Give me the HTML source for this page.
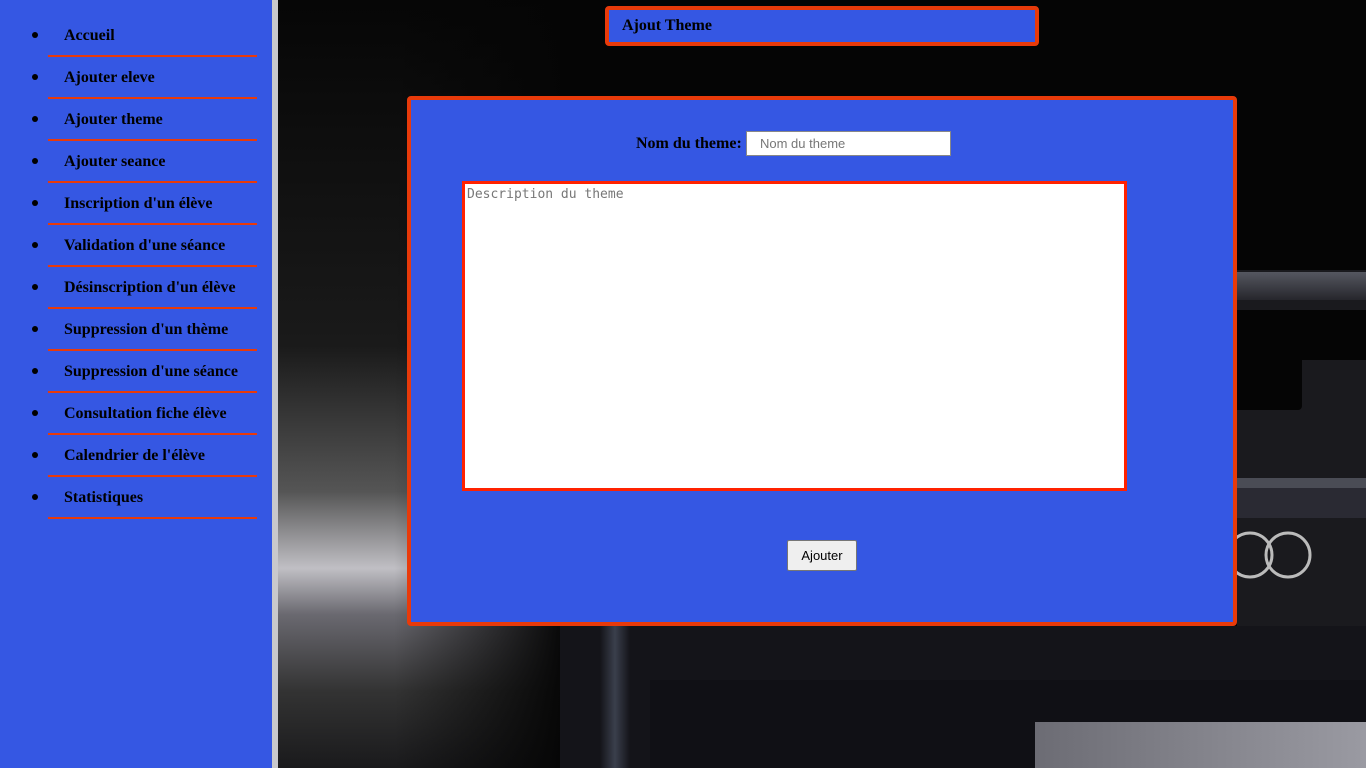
<!DOCTYPE html>
<html><head><meta charset="utf-8"><style>
*{margin:0;padding:0;box-sizing:border-box}
body{width:1366px;height:768px;overflow:hidden;background:#050505;position:relative;font-family:"Liberation Serif",serif}
.side{position:absolute;left:0;top:0;height:768px;background:#3557e3;border-right:6px solid #c8c8cc;width:278px}
.side ul{list-style:none}
.side li{position:absolute;left:48px;width:209px;height:42px;border-bottom:2px solid #e83a0a;font-weight:bold;font-size:16px;color:#000}
.side li span{position:absolute;left:16px;top:12px}
.side li::before{content:"";position:absolute;left:-16px;top:17px;width:6px;height:6px;border-radius:50%;background:#000}
.bg{position:absolute}
.title{position:absolute;left:605px;top:6px;width:434px;height:40px;background:#3557e3;border:4px solid #e83a0a;border-radius:4px;font-weight:bold;font-size:16px;padding:7px 0 0 13px}
.main{position:absolute;left:407px;top:96px;width:830px;height:530px;background:#3557e3;border:4px solid #e83a0a;border-radius:4px}
.lbl{position:absolute;left:225px;top:35px;font-weight:bold;font-size:16px}
.inp{position:absolute;left:335px;top:31px;width:205px;height:25px;background:#fff;border:1px solid #888;font-family:"Liberation Sans",sans-serif;font-size:13px;color:#777;padding:4px 0 0 13px}
.ta{position:absolute;left:51px;top:81px;width:665px;height:310px;background:#fff;border:3px solid #ff2200;font-family:"DejaVu Sans Mono",monospace;font-size:13px;color:#777;padding:3px 2px}
.btn{position:absolute;left:376px;top:440px;width:70px;height:31px;background:#efefef;border:1px solid #767676;border-radius:2px;font-family:"Liberation Sans",sans-serif;font-size:13px;text-align:center;line-height:29px}
</style></head><body>
<div class="bg" style="left:278px;top:0;width:290px;height:768px;background:linear-gradient(90deg,rgba(0,0,0,0) 0%,rgba(0,0,0,0) 40%,#050505 100%),linear-gradient(#060606 0%,#1a1a1a 45%,#555 64%,#c0bfc4 74%,#6a6970 80%,#333 90%,#1a1a1c 100%)"></div>
<div class="bg" style="left:560px;top:626px;width:806px;height:142px;background:#141419"></div>
<div class="bg" style="left:600px;top:626px;width:30px;height:142px;background:linear-gradient(90deg,#141419,#3a3f4c,#141419)"></div>
<div class="bg" style="left:650px;top:680px;width:716px;height:88px;background:#101015"></div>
<div class="bg" style="left:1035px;top:722px;width:331px;height:46px;background:linear-gradient(90deg,#6c6c74,#9a9aa2)"></div>
<div class="bg" style="left:1237px;top:270px;width:129px;height:356px;background:#1a1a1e"></div>
<div class="bg" style="left:1237px;top:272px;width:129px;height:28px;background:linear-gradient(#555760,#26262c)"></div>
<div class="bg" style="left:1237px;top:310px;width:129px;height:50px;background:#050505"></div>
<div class="bg" style="left:1237px;top:360px;width:65px;height:50px;background:#050505;border-radius:0 0 4px 0"></div>
<div class="bg" style="left:1237px;top:478px;width:129px;height:10px;background:#4a4c55"></div>
<div class="bg" style="left:1237px;top:488px;width:129px;height:30px;background:#2a2a33"></div>
<svg class="bg" style="left:1220px;top:525px" width="110" height="60"><g fill="none" stroke="#bbb" stroke-width="3"><circle cx="30" cy="30" r="22"/><circle cx="68" cy="30" r="22"/></g></svg>
<div class="side"><ul>
<li style="top:15px"><span>Accueil</span></li>
<li style="top:57px"><span>Ajouter eleve</span></li>
<li style="top:99px"><span>Ajouter theme</span></li>
<li style="top:141px"><span>Ajouter seance</span></li>
<li style="top:183px"><span>Inscription d'un élève</span></li>
<li style="top:225px"><span>Validation d'une séance</span></li>
<li style="top:267px"><span>Désinscription d'un élève</span></li>
<li style="top:309px"><span>Suppression d'un thème</span></li>
<li style="top:351px"><span>Suppression d'une séance</span></li>
<li style="top:393px"><span>Consultation fiche élève</span></li>
<li style="top:435px"><span>Calendrier de l'élève</span></li>
<li style="top:477px"><span>Statistiques</span></li>
</ul></div>
<div class="title">Ajout Theme</div>
<div class="main">
<div class="lbl">Nom du theme:</div>
<div class="inp">Nom du theme</div>
<div class="ta">Description du theme</div>
<div class="btn">Ajouter</div>
</div>
</body></html>
